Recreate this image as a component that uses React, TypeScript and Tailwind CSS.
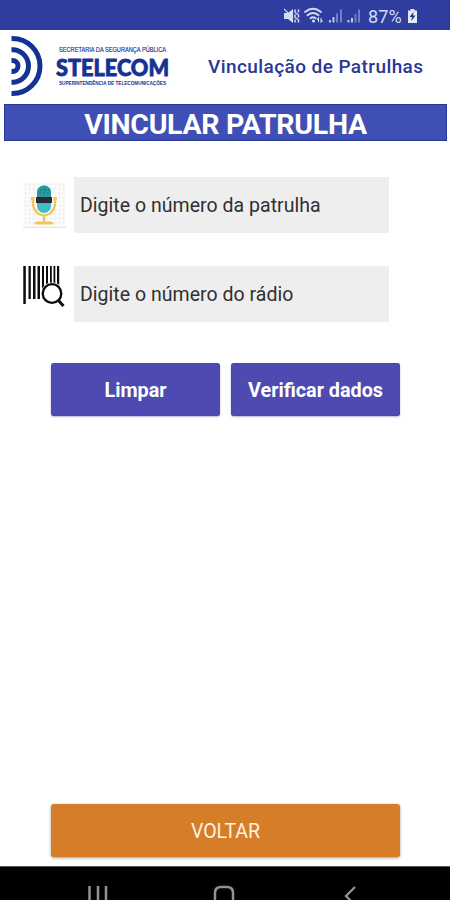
import React from "react";

function StatusBar() {
  return (
    <header className="flex h-[30px] shrink-0 items-center justify-end bg-[#2e3d9f] pr-[32px] text-[#d3dcf5]">
      <svg width="84" height="30" viewBox="0 0 84 30" fill="none">
        <path d="M0 13h4l5-4v14l-5-4H0z" fill="#d3dcf5" />
        <path d="M0 9l9 9" stroke="#d3dcf5" strokeWidth="1.2" />
        <path d="M11 9.500v3M11 14.500v3M11 19.500v3M14.500 9.500v3M14.500 14.500v3M14.500 19.500v3M11 12.500l3 2M11 17.500l3 2" stroke="#d3dcf5" strokeWidth="1.500" />
        <g stroke="#d3dcf5" strokeWidth="1.8" strokeLinecap="round">
          <path d="M21 12q8-6.500 16 0" />
          <path d="M23.500 15.300q5.500-4.500 11 0" />
          <path d="M26.500 18.300q2.500-2 5 0" />
        </g>
        <circle cx="29.500" cy="21" r="1.500" fill="#d3dcf5" />
        <path d="M34.500 22v-4l-1.500 1.500M37 18v4l1.500-1.500" stroke="#d3dcf5" strokeWidth="1.100" />
        <g fill="#bac7ee">
          <path d="M45 20h2v2.500h-2zM48.500 17h2v5.500h-2z" />
          <path d="M63.500 20h2v2.500h-2zM67 18h2v4.500h-2z" />
        </g>
        <g fill="#6f80c8">
          <path d="M52 13.500h2v9h-2zM56 9.500h2v13h-2z" />
          <path d="M70.500 14h2v8.500h-2zM74 9.500h2v13h-2z" />
        </g>
      </svg>
      <span className="w-[35px] pt-[3px] text-[18px] leading-[20px] tracking-[0.1px]">87%</span>
      <svg className="ml-[4px]" width="11" height="30" viewBox="0 0 11 30">
        <path d="M3.500 9h4v1.500h2.500v12.500H1V10.500h2.500z" fill="#e2e8f8" />
        <path d="M6.500 12l-4 5h2.500l-.8 4 4.300-5.500H6z" fill="#26307c" />
      </svg>
    </header>
  );
}

function Logo() {
  return (
    <svg className="shrink-0" width="180" height="74" viewBox="0 30 180 74" fill="none">
      <g stroke="#143291" strokeWidth="5">
        <path d="M11.500 38.500H12.500A27.500 27.500 0 0 1 12.500 93.500H11.500" />
        <path d="M11.500 49.800H14A16.300 16.300 0 0 1 14 82.200H11.500" />
        <path d="M11.500 60.500H12.500A5.500 5.500 0 0 1 12.500 71.500H11.500" />
      </g>
      <g fill="#143291" fontFamily="'Liberation Sans', Arial, sans-serif">
        <text x="59" y="52.300" fontSize="6.400" stroke="#143291" strokeWidth="0.150" textLength="107" lengthAdjust="spacingAndGlyphs">SECRETARIA DA SEGURANÇA PÚBLICA</text>
        <text x="56" y="75.500" fontSize="22.500" fontWeight="900" fontFamily="Lato, sans-serif" stroke="#143291" strokeWidth="0.800" textLength="113" lengthAdjust="spacingAndGlyphs">STELECOM</text>
        <text x="59" y="85.200" fontSize="4.600" fontWeight="700" textLength="107" lengthAdjust="spacingAndGlyphs">SUPERINTENDÊNCIA DE TELECOMUNICAÇÕES</text>
      </g>
    </svg>
  );
}

function MicIcon() {
  return (
    <svg width="43" height="46" viewBox="23 182 43 46" fill="none">
      <defs>
        <pattern id="checks" width="6" height="6" patternUnits="userSpaceOnUse" patternTransform="rotate(45)">
          <path d="M0 0h3v3H0zM3 3h3v3H3z" fill="#f3f3f3" />
        </pattern>
      </defs>
      <path d="M23 182h43v46H23z" fill="#fdfdfd" />
      <path d="M23 182h43v46H23z" fill="url(#checks)" />
      <path d="M23 227.500h43" stroke="#e4e4e4" />
      <path d="M33 198v5a11 12.500 0 0 0 22 0v-5M44 215.500v7" stroke="#efc75a" strokeWidth="2.300" />
      <path d="M31 197h3.500v3.500h-3.500zM53.500 197h3.500v3.500h-3.500z" fill="#efc75a" />
      <path d="M34.500 224.500q0-3 3-3h13q3 0 3 3z" fill="#efc75a" />
      <rect x="37" y="185.500" width="14" height="27.500" rx="7" fill="#3fbfc2" />
      <path d="M37 198v-5.500a7 7 0 0 1 14 0v5.500z" fill="#28999f" />
      <path d="M40 190h2m2 0h2m2 0h1M39 193h2m2 0h2m2 0h2" stroke="#16757d" strokeWidth="1.200" />
      <path d="M36 197h16v6H36z" fill="#2c2936" />
    </svg>
  );
}

function BarcodeIcon() {
  return (
    <svg width="43" height="43" viewBox="23 265 43 43" fill="none">
      <g fill="#0b0b0b">
        <path d="M23.300 266h2.500v38h-2.500zM28.500 266h2.300v33h-2.300zM33 266h2.500v33h-2.500zM37.500 266h2.500v33h-2.500zM42 266h2v33h-2zM46 266h2v27h-2zM50 266h1.800v20h-1.800zM53.500 266h1.800v20h-1.800zM57 266h2.200v21h-2.200z" />
      </g>
      <circle cx="52" cy="293.500" r="11" fill="#fff" />
      <circle cx="52" cy="293.500" r="9.300" stroke="#0b0b0b" strokeWidth="2.300" />
      <path d="M58 300l5.500 6" stroke="#0b0b0b" strokeWidth="3" />
    </svg>
  );
}

function Field({ icon, children }: { icon: React.ReactNode; children: string }) {
  return (
    <div className="flex h-[56px]">
      <div className="flex w-[51px] shrink-0 items-center">{icon}</div>
      <div className="flex w-[315px] items-center bg-[#eeeeee] pt-[2px] pl-[6px] text-[19.500px] tracking-[0.03px] text-[#303030]">
        {children}
      </div>
    </div>
  );
}

function ActionButton({ children }: { children: string }) {
  return (
    <button className="h-[53px] flex-1 rounded-[3px] bg-[#4d4bb2] pt-[2px] text-[19.800px] font-bold whitespace-nowrap text-white shadow-[inset_0_0_1px_#343187,0_1px_2px_#b5b5ce]">
      {children}
    </button>
  );
}

export default function App() {
  return (
    <div className="flex h-[900px] w-[450px] flex-col overflow-hidden bg-white font-[Roboto,sans-serif]">
      <StatusBar />
      <div className="flex h-[74px] shrink-0 items-center">
        <Logo />
        <h1 className="ml-[28px] text-[19px] font-medium tracking-[0.42px] whitespace-nowrap text-[#293894]">Vinculação de Patrulhas</h1>
      </div>
      <h2 className="mr-[3px] ml-[4px] flex h-[37px] shrink-0 items-center justify-center border border-[#273896] bg-[#404fb5] pt-[5px] text-[28.500px] leading-[34px] font-bold tracking-[-0.3px] text-white">
        VINCULAR PATRULHA
      </h2>
      <main className="flex flex-1 flex-col">
        <div className="mt-[36px] ml-[23px] flex flex-col gap-[33px]">
          <Field icon={<MicIcon />}>Digite o número da patrulha</Field>
          <Field icon={<div className="-mt-[15px]"><BarcodeIcon /></div>}>Digite o número do rádio</Field>
        </div>
        <div className="mt-[41px] mr-[50px] ml-[51px] flex gap-[11px]">
          <ActionButton>Limpar</ActionButton>
          <ActionButton>Verificar dados</ActionButton>
        </div>
        <button className="mt-auto mr-[50px] mb-[9px] ml-[51px] h-[53px] rounded-[3px] bg-[#d67d27] pt-[2px] text-[19.500px] text-[#fff3e2] shadow-[0_1px_3px_#999]">
          VOLTAR
        </button>
      </main>
      <nav className="h-[34px] shrink-0 border-t border-[#555] bg-black">
        <svg width="450" height="33" viewBox="0 867 450 33" fill="none" stroke="#929292">
          <path d="M89.500 886v14M98 886v14M106 886v14" strokeWidth="2.500" />
          <path d="M215 900v-7q0-6 6-6h6q6 0 6 6v7" strokeWidth="2.500" />
          <path d="M355 887l-9 9 5 5" strokeWidth="2.300" />
        </svg>
      </nav>
    </div>
  );
}
